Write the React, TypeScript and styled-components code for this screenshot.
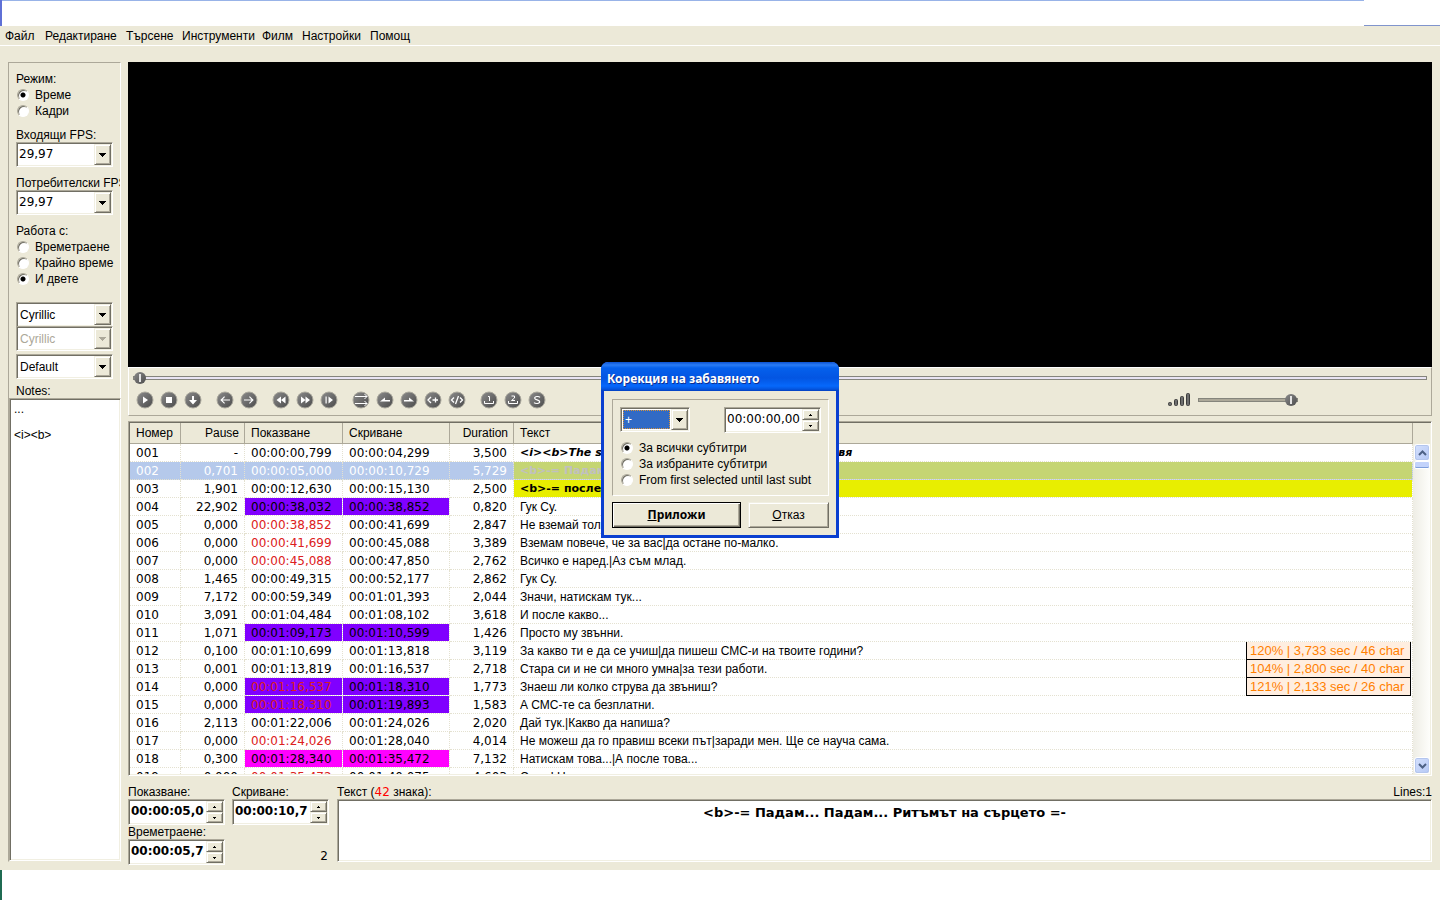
import React from "react";
import styled, { createGlobalStyle, css } from "styled-components";

const face = "#ece9d8";
const shade = "#aca899";
const dark = "#716f64";
const light = "#f1efe2";
const uiFont = '"Liberation Sans", Arial, sans-serif';
const digitFont = '"DejaVu Sans", Verdana, sans-serif';

const sunken = css`
  border: 1px solid;
  border-color: ${shade} #fff #fff ${shade};
  box-shadow: inset 1px 1px ${dark}, inset -1px -1px ${light};
  padding: 2px;
`;

const raised = css`
  border: 1px solid;
  border-color: ${light} ${dark} ${dark} ${light};
  box-shadow: inset 1px 1px #fff, inset -1px -1px ${shade};
  background: ${face};
`;

const GlobalStyle = createGlobalStyle`
  *, *::before, *::after { box-sizing: border-box; }
  body { margin: 0; background: #fff; font: 12px/16px ${uiFont}; color: #000; }
  button, input, select, textarea { font: inherit; color: inherit; margin: 0; border-radius: 0; }
`;

const Page = styled.div`
  display: flex;
  flex-direction: column;
  min-height: 100vh;
`;

const TopStrip = styled.div`
  height: 26px;
  display: flex;
  border-left: 2px solid #5f70d6;

  &::before {
    content: "";
    flex: 1;
    border-top: 1px solid #98b3e8;
  }

  &::after {
    content: "";
    width: 76px;
    border-bottom: 1px solid #8094cc;
  }
`;

const BottomStrip = styled.div`
  height: 30px;
  border-left: 2px solid #1f6b52;
`;

const Window = styled.div`
  flex: 1;
  display: flex;
  flex-direction: column;
  background: ${face};
`;

const MenuBar = styled.nav`
  display: grid;
  grid-template-columns: 40px 81px 56px 80px 40px 68px auto;
  justify-content: start;
  height: 20px;
  padding: 0 5px;
  border-bottom: 1px solid #fff;
`;

const MenuItem = styled.button`
  padding: 0;
  border: 0;
  background: none;
  text-align: left;
  white-space: nowrap;
`;

const Workspace = styled.div`
  flex: 1;
  display: flex;
  gap: 7px;
  padding: 16px 8px 5px;
`;

const Sidebar = styled.aside`
  width: 113px;
  margin-bottom: 3px;
  display: flex;
  flex-direction: column;
  border: 1px solid;
  border-color: ${shade} #fff transparent ${shade};
`;

const Options = styled.div`
  display: flex;
  flex-direction: column;
  gap: 8px;
  padding: 8px 0 5px 7px;
`;

const Field = styled.div<{ $top?: number }>`
  margin-top: ${(p) => p.$top ?? 0}px;
  display: flex;
  flex-direction: column;
  white-space: nowrap;
  overflow-x: clip;
`;

const FieldLabel = styled.label`
  height: 15px;
`;

const LabelledField = styled(Field)`
  margin-bottom: 1px;
`;

const RadioGroup = styled.fieldset`
  margin: 0 6px 0 0;
  padding: 0;
  border: 0;
  min-width: 0;
  overflow: hidden;
`;

const Legend = styled.legend`
  padding: 0;
`;

const RadioLabel = styled.label`
  display: flex;
  align-items: center;
  height: 16px;
  gap: 6px;
  white-space: nowrap;
`;

const RadioInput = styled.input.attrs({ type: "radio" })`
  appearance: none;
  flex: none;
  width: 12px;
  height: 12px;
  margin-left: 1px;
  border: 1px solid;
  border-color: ${shade} #fff #fff ${shade};
  border-radius: 50%;
  background: #fff;
  box-shadow: inset 1px 1px ${dark};

  &:checked {
    background: radial-gradient(circle, #000 2px, #fff 3px);
  }
`;

function Radio({ name, label, checked }: { name: string; label: string; checked?: boolean }) {
  return (
    <RadioLabel>
      <RadioInput name={name} defaultChecked={checked} />
      {label}
    </RadioLabel>
  );
}

const SelectFrame = styled.span<{ $width: number }>`
  ${sunken}
  position: relative;
  display: block;
  width: ${(p) => p.$width}px;
  height: 25px;
  margin-bottom: -1px;
  background: #fff;
`;

const NativeSelect = styled.select<{ $digits?: boolean; $active?: boolean }>`
  appearance: none;
  display: block;
  width: calc(100% - 17px);
  height: 19px;
  padding: ${(p) => (p.$digits ? "0 0 2px" : "0 1px")};
  border: 0;
  outline: 0;
  background: ${(p) => (p.$active ? "#316ac5" : "#fff")};
  color: ${(p) => (p.$active ? "#fff" : "#000")};
  ${(p) => p.$active && "border: 1px dotted #d9943a;"}
  font-family: ${(p) => (p.$digits ? digitFont : uiFont)};

  &:disabled {
    color: ${shade};
    opacity: 1;
  }
`;

const Arrow = styled.span<{ $off?: boolean }>`
  ${raised}
  position: absolute;
  top: 1px;
  right: 1px;
  bottom: 1px;
  width: 17px;
  display: grid;
  place-items: center;
  pointer-events: none;
  color: ${(p) => (p.$off ? shade : "#000")};
`;

interface SelectProps {
  id?: string;
  label?: string;
  value: string;
  width?: number;
  digits?: boolean;
  active?: boolean;
  disabled?: boolean;
}

function Select({ id, label, value, width = 97, digits, active, disabled }: SelectProps) {
  return (
    <SelectFrame $width={width}>
      <NativeSelect id={id} aria-label={label} disabled={disabled} $digits={digits} $active={active}>
        <option>{value}</option>
      </NativeSelect>
      <Arrow $off={disabled}>
        <svg width="7" height="4" viewBox="0 0 7 4" fill="currentColor">
          <path d="M0 0h7v1h-1v1h-1v1h-1v1h-1v-1h-1v-1h-1v-1h-1z" />
        </svg>
      </Arrow>
    </SelectFrame>
  );
}

const NotesLabel = styled.label`
  height: 15px;
  padding-left: 7px;
`;

const Notes = styled.textarea`
  ${sunken}
  flex: 1;
  width: 112px;
  padding: 4px;
  background: #fff;
  outline: 0;
  resize: none;
  line-height: 13px;
`;

const Main = styled.main`
  flex: 1;
  min-width: 0;
  display: flex;
  flex-direction: column;
`;

const Video = styled.div`
  flex: 1 0 305px;
  background: #000;
`;

const Player = styled.section`
  height: 49px;
  padding: 4px 4px 0;
  border: 1px solid;
  border-color: #fff ${shade} ${shade} #fff;
`;

const Range = styled.input.attrs({ type: "range" })<{ $fill: string }>`
  appearance: none;
  display: block;
  width: 100%;
  min-width: 0;
  height: 12px;
  background: none;

  &::-webkit-slider-runnable-track {
    height: 4px;
    border: 1px solid #85857c;
    background: ${(p) => p.$fill};
  }

  &::-webkit-slider-thumb {
    appearance: none;
    width: 12px;
    height: 12px;
    margin-top: -5px;
    border-radius: 50%;
    background: linear-gradient(#e4e4e4, #e4e4e4) center / 2px 8px no-repeat,
      linear-gradient(135deg, #8a8a8a, #4c4c4c);
  }
`;

const Controls = styled.div`
  display: flex;
  align-items: center;
  gap: 14px;
  padding: 7px 0 0 3px;
`;

const ButtonGroup = styled.div`
  display: flex;
  gap: 6px;
`;

const RoundButton = styled.button`
  width: 18px;
  height: 18px;
  padding: 0;
  border: 0;
  background: none;
`;

const Volume = styled.div`
  display: flex;
  align-items: center;
  gap: 8px;
  width: 130px;
  margin: 0 129px 0 auto;
`;

const Bars = styled.svg`
  flex: none;
`;

const icons: { name: string; art: React.ReactNode }[][] = [
  [
    { name: "Play", art: <path d="M7 5.5v7l5-3.500z" /> },
    { name: "Stop", art: <path d="M6 6h6v6H6z" /> },
    { name: "Jump", art: <path d="M8 5h2v4h3l-4 4.500l-4-4.500h3z" /> },
  ],
  [
    { name: "Previous", art: <path d="M14 8.500v1H6.500l2.500 2.500-.8.800L4.300 9l3.900-3.800.8.800-2.500 2.500z" /> },
    { name: "Next", art: <path d="M4 8.500v1h7.500L9 12l.8.800L13.700 9 9.800 5.200 9 6l2.500 2.500z" /> },
  ],
  [
    { name: "Rewind", art: <path d="M9 5.500v7L4.500 9zM13.500 5.500v7L9 9z" /> },
    { name: "Forward", art: <path d="M5 5.500v7L9.500 9zM9.500 5.500v7L14 9z" /> },
    { name: "Step", art: <path d="M5.500 5.500h1.200v7H5.500zM8.500 5.500v7L13 9z" /> },
  ],
  [
    {
      name: "Move to",
      art: <path d="M3 5.500h12M12.500 3l2.500 2.500L12.500 8M3 12.500h12M12.500 10l2.500 2.500-2.500 2.500" fill="none" stroke="#fff" />,
    },
    { name: "Set start", art: <path d="M4 10.500l5-4v2.500h5v1.500z" /> },
    { name: "Set end", art: <path d="M14 10.500l-5-4v2.500H4v1.500z" /> },
    {
      name: "Start point",
      art: <path d="M7 6L4 9l3 3M8.500 9h5.500M11.500 6.500v5" fill="none" stroke="#fff" strokeWidth="1.3" />,
    },
    {
      name: "End point",
      art: <path d="M6 6.500L3.500 9 6 11.500M12 6.500L14.500 9 12 11.500M10.500 5l-3 8" fill="none" stroke="#fff" strokeWidth="1.300" />,
    },
  ],
  [
    { name: "First sync", art: <path d="M4.500 10v2.500h9V10M8 5.500h1.500V10" fill="none" stroke="#fff" /> },
    {
      name: "Second sync",
      art: <path d="M4.500 10v2.500h9V10M7.500 5h3v2l-3 2.500h3.500" fill="none" stroke="#fff" />,
    },
    {
      name: "Sync",
      art: <path d="M12 6.300C11 5.200 6.700 5 6.700 7.200C6.700 9.300 11.700 8.500 11.700 10.800C11.700 13 7.200 12.800 6 11.600" fill="none" stroke="#fff" strokeWidth="1.200" />,
    },
  ],
];

const Grid = styled.section`
  ${sunken}
  height: 355px;
  margin-top: 5px;
  padding: 1px;
  display: flex;
  overflow: hidden;
`;

const TableClip = styled.div`
  flex: 1;
  min-width: 0;
  height: 351px;
  overflow: hidden;
  background: #fff;
`;

const Table = styled.table`
  width: 100%;
  table-layout: fixed;
  border-collapse: separate;
  border-spacing: 0;
`;

const Col = styled.col<{ $width?: number }>`
  width: ${(p) => (p.$width ? `${p.$width}px` : "auto")};
`;

const Th = styled.th<{ $right?: boolean }>`
  height: 21px;
  padding: 0 5px 0 6px;
  border: solid ${shade};
  border-width: 0 1px 1px 0;
  background: ${face};
  font-weight: normal;
  text-align: ${(p) => (p.$right ? "right" : "left")};
`;

const Row = styled.tr<{ $selected?: boolean }>`
  ${(p) =>
    p.$selected &&
    css`
      background: #b5c9eb;
      color: #fff;
    `}
`;

const Td = styled.td<{ $bg?: string; $color?: string; $right?: boolean; $text?: boolean; $bold?: boolean; $italic?: boolean }>`
  position: relative;
  height: 18px;
  padding: 0 6px;
  border: dotted #e4e1d0;
  border-width: 0 1px 1px 0;
  background-clip: padding-box;
  ${(p) => p.$bg && `background-color: ${p.$bg};`}
  ${(p) => p.$color && `color: ${p.$color};`}
  font-family: ${(p) => (p.$text && !p.$bold ? uiFont : digitFont)};
  font-weight: ${(p) => (p.$bold ? "bold" : "normal")};
  font-style: ${(p) => (p.$italic ? "italic" : "normal")};
  font-size: ${(p) => (p.$bold ? 11 : 12)}px;
  text-align: ${(p) => (p.$right ? "right" : "left")};
  white-space: nowrap;
`;

const Warning = styled.span`
  position: absolute;
  top: 0;
  right: 1px;
  bottom: -1px;
  width: 165px;
  padding: 0 3px;
  border: solid #000;
  border-width: 0 1px 1px;
  background: #ffeee0;
  color: #ff8000;
  font-size: 13px;
  line-height: 18px;
`;

const ScrollBar = styled.div`
  width: 17px;
  display: flex;
  flex-direction: column;
  padding: 21px 0 0 1px;
  background: linear-gradient(${face} 21px, transparent 21px), linear-gradient(90deg, #eeede5, #fefefb);
`;

const ScrollButton = styled.button`
  height: 17px;
  padding: 0;
  display: grid;
  place-items: center;
  border: 1px solid #fff;
  border-radius: 3px;
  background: linear-gradient(135deg, #d5e1fd, #b5c8f5);
  box-shadow: inset 0 0 0 1px #b4c6ee, inset 0 -1px #8aa7dd;
`;

const ScrollThumb = styled.div`
  height: 8px;
  margin-bottom: auto;
  border: 1px solid #fff;
  border-radius: 2px;
  background: #c3d3fb;
  box-shadow: inset 0 -1px #7f9fdc;
`;

const Editor = styled.section`
  display: grid;
  grid-template-columns: 96px 96px 1fr;
  column-gap: 8px;
  padding-top: 9px;
  line-height: 14px;
`;

const Times = styled.div`
  display: flex;
  flex-direction: column;
`;

const Count = styled.output`
  margin-top: auto;
  padding-bottom: 2px;
  text-align: right;
  font-family: ${digitFont};
`;

const TextPane = styled.div`
  display: flex;
  flex-direction: column;
  margin: 0 0 3px 1px;
`;

const TextHead = styled.div`
  display: flex;
  justify-content: space-between;
`;

const Red = styled.span`
  color: #f00;
  font-family: ${digitFont};
`;

const TextBox = styled.textarea`
  ${sunken}
  flex: 1;
  width: 100%;
  padding: 5px 4px;
  background: #fff;
  outline: 0;
  resize: none;
  font: bold 13px/16px ${digitFont};
  text-align: center;
`;

const SpinFrame = styled.span`
  ${sunken}
  display: flex;
  width: 97px;
  height: 26px;
  padding: 1px;
  background: #fff;
`;

const SpinInput = styled.input<{ $bold?: boolean }>`
  flex: 1;
  min-width: 0;
  height: 19px;
  padding: 0 0 0 1px;
  margin-right: 2px;
  border: 0;
  outline: 0;
  background: none;
  font-family: ${digitFont};
  font-weight: ${(p) => (p.$bold ? "bold" : "normal")};
`;

const SpinButtons = styled.span`
  display: flex;
  flex-direction: column;
  width: 17px;
`;

const SpinButton = styled.button`
  ${raised}
  flex: 1;
  padding: 0;
  display: grid;
  place-items: center;
`;

function Spin({ id, label, value, bold }: { id?: string; label?: string; value: string; bold?: boolean }) {
  return (
    <SpinFrame>
      <SpinInput id={id} aria-label={label} defaultValue={value} $bold={bold} />
      <SpinButtons>
        <SpinButton aria-label="Increase">
          <svg width="3" height="2" viewBox="0 0 3 2">
            <path d="M1 0h1v1h1v1H0V1h1z" />
          </svg>
        </SpinButton>
        <SpinButton aria-label="Decrease">
          <svg width="3" height="2" viewBox="0 0 3 2">
            <path d="M0 0h3v1H2v1H1V1H0z" />
          </svg>
        </SpinButton>
      </SpinButtons>
    </SpinFrame>
  );
}

const Dialog = styled.div`
  position: fixed;
  top: 50%;
  left: 50%;
  transform: translate(-50%, -50%);
  width: 238px;
  border: 3px solid #0a3fd0;
  border-top: 0;
  border-radius: 7px 7px 0 0;
  background: ${face};
`;

const DialogTitle = styled.h1`
  margin: 0 -3px;
  height: 29px;
  padding: 4px 6px 0;
  border-radius: 7px 7px 0 0;
  background: linear-gradient(#0a50d0 0, #2a7cf5 3px, #0560ec 6px, #0355e2 16px, #0668fb 24px, #0456e0 27px, #0340c0);
  color: #fff;
  font: bold 12px/26px "Noto Sans", sans-serif;
  text-shadow: 1px 1px #0f2f90;
`;

const DialogBody = styled.div`
  padding: 8px 7px 7px 8px;
`;

const GroupBox = styled.div`
  height: 97px;
  padding: 7px;
  border: 1px solid;
  border-color: ${shade} #fff #fff ${shade};
`;

const DialogTop = styled.div`
  display: flex;
  justify-content: space-between;
  margin-bottom: 7px;
`;

const DialogButtons = styled.div`
  display: flex;
  gap: 7px;
  margin-top: 6px;
`;

const PushButton = styled.button<{ $primary?: boolean }>`
  ${raised}
  flex: ${(p) => (p.$primary ? "1" : "0 0 81px")};
  height: 26px;
  padding: 0;
  ${(p) =>
    p.$primary &&
    css`
      border-color: #000;
      box-shadow: inset 1px 1px #fff, inset -1px -1px ${dark}, inset -2px -2px ${shade};
      font: bold 12px/16px "Noto Sans", sans-serif;
    `}
`;

interface Line {
  n: string;
  pause: string;
  show: string;
  hide: string;
  dur: string;
  text: string;
  red?: boolean;
  bg?: string;
  warn?: string;
  kind?: "italic" | "selected" | "marked";
}

const violet = "#8000ff";
const lines: Line[] = [
  { n: "001", pause: "-", show: "00:00:00,799", hide: "00:00:04,299", dur: "3,500", text: "<i><b>The subtitles have been translated by Витевя", kind: "italic" },
  { n: "002", pause: "0,701", show: "00:00:05,000", hide: "00:00:10,729", dur: "5,729", text: "<b>-= Падам... Падам... Ритъмът на =-", kind: "selected" },
  { n: "003", pause: "1,901", show: "00:00:12,630", hide: "00:00:15,130", dur: "2,500", text: "<b>-= последният танц =-", kind: "marked" },
  { n: "004", pause: "22,902", show: "00:00:38,032", hide: "00:00:38,852", dur: "0,820", text: "Гук Су.", bg: violet },
  { n: "005", pause: "0,000", show: "00:00:38,852", hide: "00:00:41,699", dur: "2,847", text: "Не вземай толкова много.", red: true },
  { n: "006", pause: "0,000", show: "00:00:41,699", hide: "00:00:45,088", dur: "3,389", text: "Вземам повече, че за вас|да остане по-малко.", red: true },
  { n: "007", pause: "0,000", show: "00:00:45,088", hide: "00:00:47,850", dur: "2,762", text: "Всичко е наред.|Аз съм млад.", red: true },
  { n: "008", pause: "1,465", show: "00:00:49,315", hide: "00:00:52,177", dur: "2,862", text: "Гук Су." },
  { n: "009", pause: "7,172", show: "00:00:59,349", hide: "00:01:01,393", dur: "2,044", text: "Значи, натискам тук..." },
  { n: "010", pause: "3,091", show: "00:01:04,484", hide: "00:01:08,102", dur: "3,618", text: "И после какво..." },
  { n: "011", pause: "1,071", show: "00:01:09,173", hide: "00:01:10,599", dur: "1,426", text: "Просто му звънни.", bg: violet },
  { n: "012", pause: "0,100", show: "00:01:10,699", hide: "00:01:13,818", dur: "3,119", text: "За какво ти е да се учиш|да пишеш СМС-и на твоите години?", warn: "120% | 3,733 sec / 46 char" },
  { n: "013", pause: "0,001", show: "00:01:13,819", hide: "00:01:16,537", dur: "2,718", text: "Стара си и не си много умна|за тези работи.", warn: "104% | 2,800 sec / 40 char" },
  { n: "014", pause: "0,000", show: "00:01:16,537", hide: "00:01:18,310", dur: "1,773", text: "Знаеш ли колко струва да звъниш?", red: true, bg: violet, warn: "121% | 2,133 sec / 26 char" },
  { n: "015", pause: "0,000", show: "00:01:18,310", hide: "00:01:19,893", dur: "1,583", text: "А СМС-те са безплатни.", red: true, bg: violet },
  { n: "016", pause: "2,113", show: "00:01:22,006", hide: "00:01:24,026", dur: "2,020", text: "Дай тук.|Какво да напиша?" },
  { n: "017", pause: "0,000", show: "00:01:24,026", hide: "00:01:28,040", dur: "4,014", text: "Не можеш да го правиш всеки път|заради мен. Ще се науча сама.", red: true },
  { n: "018", pause: "0,300", show: "00:01:28,340", hide: "00:01:35,472", dur: "7,132", text: "Натискам това...|А после това...", bg: "#ff00ff" },
  { n: "019", pause: "0,000", show: "00:01:35,472", hide: "00:01:40,075", dur: "4,603", text: "Само! Не", red: true },
];

const textBg = { italic: undefined, selected: "#c5d573", marked: "#e8ee00" };

function LineRow({ line }: { line: Line }) {
  return (
    <Row $selected={line.kind === "selected"}>
      <Td>{line.n}</Td>
      <Td $right>{line.pause}</Td>
      <Td $bg={line.bg} $color={line.red ? "#dc2020" : undefined}>{line.show}</Td>
      <Td $bg={line.bg}>{line.hide}</Td>
      <Td $right>{line.dur}</Td>
      <Td
        $text
        $bold={!!line.kind}
        $italic={line.kind === "italic"}
        $bg={line.kind && textBg[line.kind]}
        $color={line.kind === "selected" ? "#c0c0c0" : undefined}
      >
        {line.text}
        {line.warn && <Warning>{line.warn}</Warning>}
      </Td>
    </Row>
  );
}

const Glyph = styled.svg`
  display: block;
`;

function ToolIcon({ children }: { children: React.ReactNode }) {
  return (
    <Glyph width="18" height="18" viewBox="0 0 18 18" fill="#fff">
      <defs>
        <linearGradient id="knob" x1="0" y1="0" x2="1" y2="1">
          <stop offset="0" stopColor="#8c8c8c" />
          <stop offset="1" stopColor="#4a4a4a" />
        </linearGradient>
      </defs>
      <circle cx="9" cy="9" r="8" fill="url(#knob)" stroke="#a9a79c" strokeWidth="1" />
      {children}
    </Glyph>
  );
}

const menu = ["Файл", "Редактиране", "Търсене", "Инструменти", "Филм", "Настройки", "Помощ"];

export default function App() {
  return (
    <Page lang="bg">
      <GlobalStyle />
      <TopStrip />
      <Window>
        <MenuBar>
          {menu.map((m) => (
            <MenuItem key={m}>{m}</MenuItem>
          ))}
        </MenuBar>
        <Workspace>
          <Sidebar>
            <Options>
              <RadioGroup>
                <Legend>Режим:</Legend>
                <Radio name="mode" label="Време" checked />
                <Radio name="mode" label="Кадри" />
              </RadioGroup>
              <LabelledField>
                <FieldLabel htmlFor="fps-in">Входящи FPS:</FieldLabel>
                <Select id="fps-in" value="29,97" digits />
              </LabelledField>
              <LabelledField>
                <FieldLabel htmlFor="fps-user">Потребителски FPS:</FieldLabel>
                <Select id="fps-user" value="29,97" digits />
              </LabelledField>
              <RadioGroup>
                <Legend>Работа с:</Legend>
                <Radio name="work" label="Времетраене" />
                <Radio name="work" label="Крайно време" />
                <Radio name="work" label="И двете" checked />
              </RadioGroup>
              <Field $top={7}>
                <Select label="Charset" value="Cyrillic" />
                <Select label="Translation charset" value="Cyrillic" disabled />
              </Field>
              <Field $top={-4}>
                <Select label="Style" value="Default" />
              </Field>
            </Options>
            <NotesLabel htmlFor="notes">Notes:</NotesLabel>
            <Notes id="notes" spellCheck={false} defaultValue={"...\n\n<i><b>"} />
          </Sidebar>
          <Main>
            <Video />
            <Player>
              <Range aria-label="Position" min={0} max={100} defaultValue={0} $fill="#e9e4f2" />
              <Controls>
                {icons.map((group) => (
                  <ButtonGroup key={group[0].name}>
                    {group.map((icon) => (
                      <RoundButton key={icon.name} aria-label={icon.name}>
                        <ToolIcon>{icon.art}</ToolIcon>
                      </RoundButton>
                    ))}
                  </ButtonGroup>
                ))}
                <Volume>
                  <Bars width="22" height="14" viewBox="0 0 22 14" fill="#6e6e6e" stroke="#3c3c3c">
                    <rect x=".5" y="9.500" width="3" height="3" rx="1" />
                    <rect x="6.500" y="6.500" width="3" height="6" rx="1" />
                    <rect x="12.500" y="3.500" width="3" height="9" rx="1" />
                    <rect x="18.500" y=".5" width="3" height="12" rx="1" />
                  </Bars>
                  <Range aria-label="Volume" min={0} max={100} defaultValue={100} $fill={shade} />
                </Volume>
              </Controls>
            </Player>
            <Grid>
              <TableClip>
                <Table>
                  <colgroup>
                    <Col $width={51} />
                    <Col $width={64} />
                    <Col $width={98} />
                    <Col $width={107} />
                    <Col $width={64} />
                    <Col />
                  </colgroup>
                  <thead>
                    <tr>
                      <Th>Номер</Th>
                      <Th $right>Pause</Th>
                      <Th>Показване</Th>
                      <Th>Скриване</Th>
                      <Th $right>Duration</Th>
                      <Th>Текст</Th>
                    </tr>
                  </thead>
                  <tbody>
                    {lines.map((line) => (
                      <LineRow key={line.n} line={line} />
                    ))}
                  </tbody>
                </Table>
              </TableClip>
              <ScrollBar>
                <ScrollButton aria-label="Scroll up">
                  <svg width="9" height="6" viewBox="0 0 9 6" fill="none" stroke="#4d6185" strokeWidth="2">
                    <path d="M1 5l3.500-3.500L8 5" />
                  </svg>
                </ScrollButton>
                <ScrollThumb />
                <ScrollButton aria-label="Scroll down">
                  <svg width="9" height="6" viewBox="0 0 9 6" fill="none" stroke="#4d6185" strokeWidth="2">
                    <path d="M1 1l3.500 3.500L8 1" />
                  </svg>
                </ScrollButton>
              </ScrollBar>
            </Grid>
            <Editor>
              <Times>
                <label htmlFor="show">Показване:</label>
                <Spin id="show" value="00:00:05,000" bold />
                <label htmlFor="duration">Времетраене:</label>
                <Spin id="duration" value="00:00:05,729" bold />
              </Times>
              <Times>
                <label htmlFor="hide">Скриване:</label>
                <Spin id="hide" value="00:00:10,729" bold />
                <Count>2</Count>
              </Times>
              <TextPane>
                <TextHead>
                  <label htmlFor="text">
                    Текст (<Red>42</Red> знака):
                  </label>
                  <span>Lines:1</span>
                </TextHead>
                <TextBox
                  id="text"
                  spellCheck={false}
                  defaultValue="<b>-= Падам... Падам... Ритъмът на сърцето =-"
                />
              </TextPane>
            </Editor>
          </Main>
        </Workspace>
      </Window>
      <BottomStrip />
      <Dialog role="dialog" aria-labelledby="delay-title">
        <DialogTitle id="delay-title">Корекция на забавянето</DialogTitle>
        <DialogBody>
          <GroupBox>
            <DialogTop>
              <Select label="Sign" value="+" width={70} active />
              <Spin label="Delay" value="00:00:00,000" />
            </DialogTop>
            <RadioGroup>
              <Radio name="scope" label="За всички субтитри" checked />
              <Radio name="scope" label="За избраните субтитри" />
              <Radio name="scope" label="From first selected until last subt" />
            </RadioGroup>
          </GroupBox>
          <DialogButtons>
            <PushButton $primary>
              <u>П</u>риложи
            </PushButton>
            <PushButton>
              <u>О</u>тказ
            </PushButton>
          </DialogButtons>
        </DialogBody>
      </Dialog>
    </Page>
  );
}
